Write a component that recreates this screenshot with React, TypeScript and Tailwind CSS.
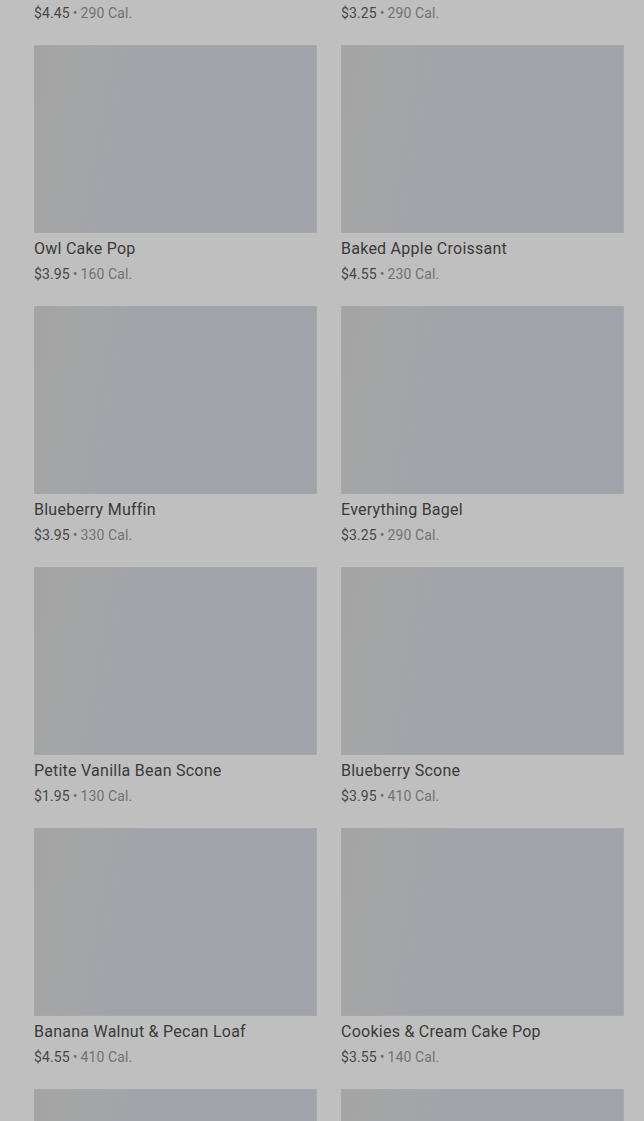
type Item = { name: string; price: string; cal: string };

const items: Item[] = [
  { name: "Plain Bagel", price: "$4.45", cal: "290 Cal." },
  { name: "Cinnamon Raisin Bagel", price: "$3.25", cal: "290 Cal." },
  { name: "Owl Cake Pop", price: "$3.95", cal: "160 Cal." },
  { name: "Baked Apple Croissant", price: "$4.55", cal: "230 Cal." },
  { name: "Blueberry Muffin", price: "$3.95", cal: "330 Cal." },
  { name: "Everything Bagel", price: "$3.25", cal: "290 Cal." },
  { name: "Petite Vanilla Bean Scone", price: "$1.95", cal: "130 Cal." },
  { name: "Blueberry Scone", price: "$3.95", cal: "410 Cal." },
  { name: "Banana Walnut & Pecan Loaf", price: "$4.55", cal: "410 Cal." },
  { name: "Cookies & Cream Cake Pop", price: "$3.55", cal: "140 Cal." },
  { name: "Chocolate Croissant", price: "$3.95", cal: "300 Cal." },
  { name: "Butter Croissant", price: "$3.45", cal: "260 Cal." },
];

export default function App() {
  return (
    <div className="h-[1121px] overflow-hidden bg-[#bfbfbf] font-['Roboto',sans-serif]">
      <div className="-mt-[216px] grid grid-cols-2 gap-x-6 gap-y-[22px] pl-[34px] pr-5">
        {items.map((item) => (
          <ProductCard key={item.name} item={item} />
        ))}
      </div>
    </div>
  );
}

function ProductCard({ item }: { item: Item }) {
  return (
    <div className="flex flex-col">
      <div className="h-[188px] border border-[#a6a7a9] bg-[linear-gradient(100deg,#a4a4a4_0%,#a4a5a6_18%,#a0a4aa_35%,#a0a4aa_100%)]" />
      <div className="mt-1 text-[16px] leading-6 tracking-[0.25px] text-[#3a3a3a]">{item.name}</div>
      <div className="mt-[3px] text-[14px] leading-5 tracking-[0.1px]">
        <span className="text-[#474747]">{item.price}</span>
        <span className="mx-[3px] text-[#727272]">•</span>
        <span className="text-[#727272]">{item.cal}</span>
      </div>
    </div>
  );
}
